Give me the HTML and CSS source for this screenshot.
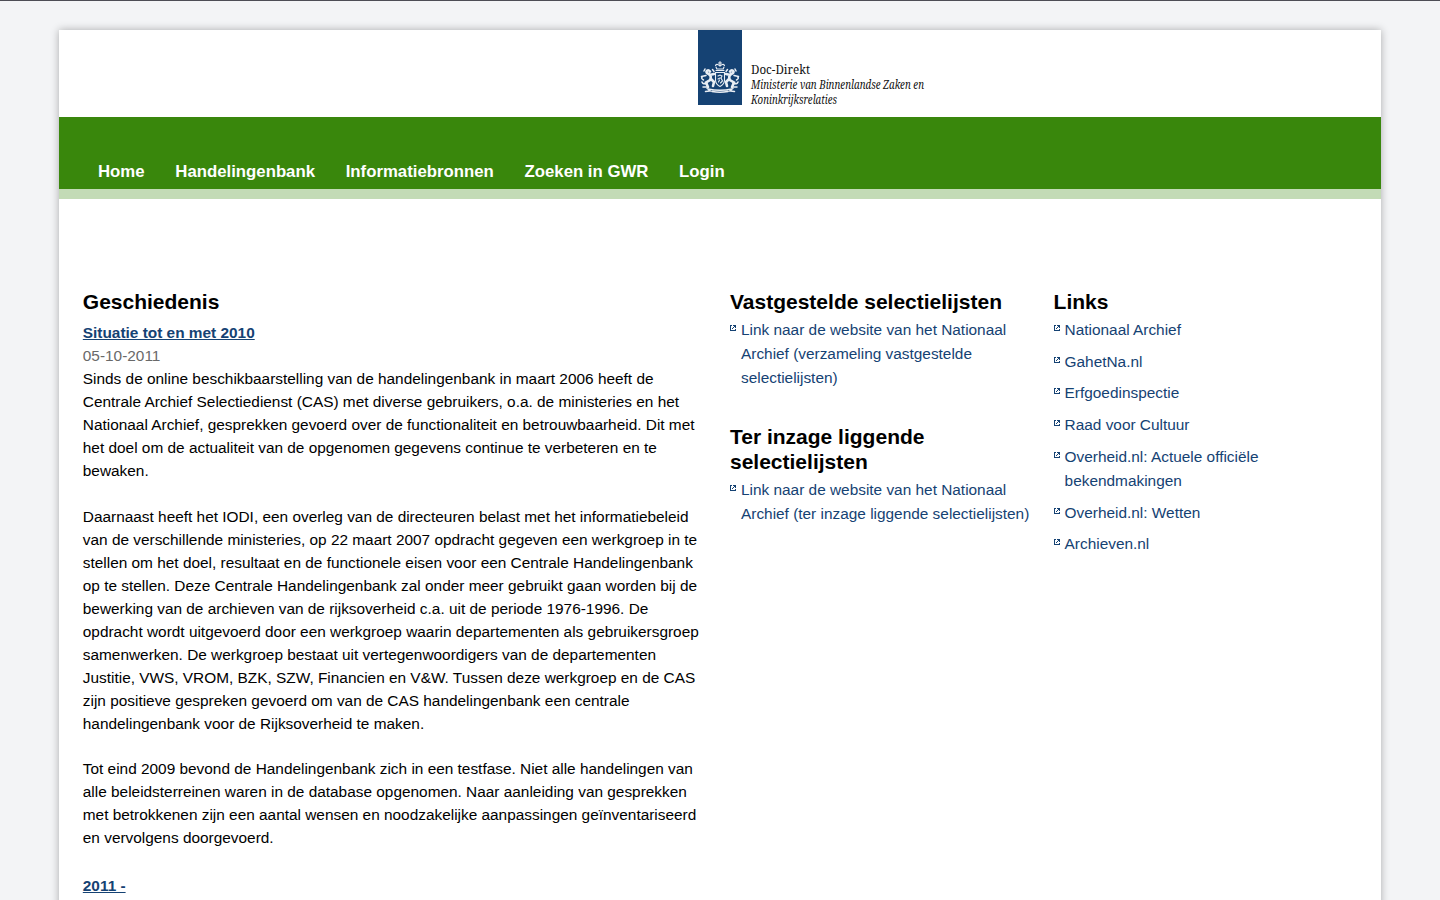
FILE: index.html
```html
<!DOCTYPE html>
<html lang="nl">
<head>
<meta charset="utf-8">
<title>Handelingenbank</title>
<link rel="stylesheet" href="styles.css">
</head>
<body>
<svg class="defs" aria-hidden="true">
  <symbol id="ext" viewBox="0 0 6 6"><path d="M0 0h2v1H1v4h4V4h1v2H0zM3 0h3v3H5V2H4V1H3zM3 2h1v1H3zM2 3h1v1H2z"/></symbol>
</svg>
<div class="page">
  <header class="brand">
    <svg class="logo" width="240" height="87" viewBox="0 0 240 87" role="img" aria-label="Doc-Direkt">
      <rect width="44" height="75" fill="#154273"/>
      <g fill="none" stroke="#e9eef4" stroke-width="1.1" stroke-linecap="round">
        <path d="M22 31.500v3M20.500 33h3M17.500 35.500c1-2 3-1 4.500.5c1.500-1.500 3.500-2.500 4.500-.5M18 37l.8 2h6.400l.8-2M18 40.500h8"/>
        <path d="M17.500 42.500h9v8q-.5 4-4.500 6q-4-2-4.500-6z"/>
        <path d="M20 46l2-1l2 1l-1 2l1.500 3l-2 2M20 49l2-1M20.500 52l1-2"/>
        <g><path stroke-width="2.600" d="M12 41.500q-2-2.500-3.500 0q0 2 2.500 2.500q3 2.500 1 6l-4 2.500l2 4.500M11.500 45l4.500-1M13 49l3 3l-1 4"/><path stroke-width="1.500" d="M8 45.500l-4.500 1M5.500 50q-3-1.500-1-3.500M9 53q-4 2-5-1M5 57h5M7 39l-1 2M14.500 39.500l1.500 2"/></g>
        <g transform="matrix(-1 0 0 1 44 0)"><path stroke-width="2.600" d="M12 41.500q-2-2.500-3.500 0q0 2 2.500 2.500q3 2.500 1 6l-4 2.500l2 4.500M11.500 45l4.500-1M13 49l3 3l-1 4"/><path stroke-width="1.500" d="M8 45.500l-4.500 1M5.500 50q-3-1.500-1-3.500M9 53q-4 2-5-1M5 57h5M7 39l-1 2M14.500 39.500l1.500 2"/></g>
        <path stroke-width="1.500" d="M7.500 61.500l4.500-.5l-2-2q12 2.500 24 0l-2 2l4.500 .5M14 61.500q8 1.500 16 0"/>
      </g>
      <g class="logo-text">
        <text x="53" y="44" textLength="59" lengthAdjust="spacingAndGlyphs">Doc-Direkt</text>
        <text class="it" x="53" y="59" textLength="173" lengthAdjust="spacingAndGlyphs">Ministerie van Binnenlandse Zaken en</text>
        <text class="it" x="53" y="74" textLength="86" lengthAdjust="spacingAndGlyphs">Koninkrijksrelaties</text>
      </g>
    </svg>
  </header>
  <nav class="nav"><a>Home</a><a>Handelingenbank</a><a>Informatiebronnen</a><a>Zoeken in GWR</a><a>Login</a></nav>
  <main class="columns">
    <section class="story">
      <h2>Geschiedenis</h2>
      <h3><a>Situatie tot en met 2010</a></h3>
      <div class="date">05-10-2011</div>
      <p>Sinds de online beschikbaarstelling van de handelingenbank in maart 2006 heeft de<br>Centrale Archief Selectiedienst (CAS) met diverse gebruikers, o.a. de ministeries en het<br>Nationaal Archief, gesprekken gevoerd over de functionaliteit en betrouwbaarheid. Dit met<br>het doel om de actualiteit van de opgenomen gegevens continue te verbeteren en te<br>bewaken.</p>
      <p class="tight">Daarnaast heeft het IODI, een overleg van de directeuren belast met het informatiebeleid<br>van de verschillende ministeries, op 22 maart 2007 opdracht gegeven een werkgroep in te<br>stellen om het doel, resultaat en de functionele eisen voor een Centrale Handelingenbank<br>op te stellen. Deze Centrale Handelingenbank zal onder meer gebruikt gaan worden bij de<br>bewerking van de archieven van de rijksoverheid c.a. uit de periode 1976-1996. De<br>opdracht wordt uitgevoerd door een werkgroep waarin departementen als gebruikersgroep<br>samenwerken. De werkgroep bestaat uit vertegenwoordigers van de departementen<br>Justitie, VWS, VROM, BZK, SZW, Financien en V&amp;W. Tussen deze werkgroep en de CAS<br>zijn positieve gespreken gevoerd om van de CAS handelingenbank een centrale<br>handelingenbank voor de Rijksoverheid te maken.</p>
      <p>Tot eind 2009 bevond de Handelingenbank zich in een testfase. Niet alle handelingen van<br>alle beleidsterreinen waren in de database opgenomen. Naar aanleiding van gesprekken<br>met betrokkenen zijn een aantal wensen en noodzakelijke aanpassingen geïnventariseerd<br>en vervolgens doorgevoerd.</p>
      <h3 class="next"><a>2011 -</a></h3>
    </section>
    <section class="lists">
      <h2>Vastgestelde selectielijsten</h2>
      <ul><li><svg class="ext"><use href="#ext"/></svg><a>Link naar de website van het Nationaal<br>Archief (verzameling vastgestelde<br>selectielijsten)</a></li></ul>
      <h2 class="second">Ter inzage liggende<br>selectielijsten</h2>
      <ul><li><svg class="ext"><use href="#ext"/></svg><a>Link naar de website van het Nationaal<br>Archief (ter inzage liggende selectielijsten)</a></li></ul>
    </section>
    <section class="links">
      <h2>Links</h2>
      <ul>
        <li><svg class="ext"><use href="#ext"/></svg><a>Nationaal Archief</a></li>
        <li><svg class="ext"><use href="#ext"/></svg><a>GahetNa.nl</a></li>
        <li><svg class="ext"><use href="#ext"/></svg><a>Erfgoedinspectie</a></li>
        <li><svg class="ext"><use href="#ext"/></svg><a>Raad voor Cultuur</a></li>
        <li><svg class="ext"><use href="#ext"/></svg><a>Overheid.nl: Actuele officiële<br>bekendmakingen</a></li>
        <li><svg class="ext"><use href="#ext"/></svg><a>Overheid.nl: Wetten</a></li>
        <li><svg class="ext"><use href="#ext"/></svg><a>Archieven.nl</a></li>
      </ul>
    </section>
  </main>
</div>
</body>
</html>
```

FILE: styles.css
```css
* { box-sizing: border-box; }
body {
  margin: 0;
  height: 900px;
  overflow: hidden;
  border-top: 1px solid #4d4d55;
  padding: 29px 59px 0;
  background: #f3f4f6;
  color: #000;
  font: 15.4px/23px "Liberation Sans", Arial, sans-serif;
}
.defs { display: none; }
.page { height: 890px; background: #fff; box-shadow: 0 0 8px rgba(0, 0, 0, .3); }
.brand { height: 87px; padding-left: 639px; }
.logo { display: block; overflow: visible; }
.logo-text { font-family: "Noto Serif", "Liberation Serif", serif; font-size: 12px; fill: #111; }
.logo-text .it { font-style: italic; }
.nav {
  display: flex;
  align-items: flex-end;
  gap: 30.7px;
  height: 82px;
  padding: 0 39px 6px;
  background: #39870c;
  border-bottom: 10px solid #c3dbb6;
  color: #fff;
  font-size: 16.78px;
  font-weight: bold;
}
.columns { display: grid; grid-template-columns: 647.2px 323.6px 1fr; padding: 90px 0 0 23.8px; white-space: nowrap; }
h2 { margin: 0; font-size: 21px; line-height: 25px; }
h3 { margin: 7px 0 0; font-size: 15.4px; line-height: 23px; }
h3 a { color: #154273; text-decoration: underline; }
.date { color: #696969; }
p { margin: 0 0 23px; }
p.tight { margin-bottom: 22px; }
h3.next { margin-top: 25px; }
ul { margin: 0; padding: 4px 0 0; list-style: none; color: #154273; line-height: 24px; }
li { display: flex; gap: 5px; margin-bottom: 7.73px; }
.ext { flex: none; width: 6px; height: 6px; margin-top: 7px; fill: #154273; shape-rendering: crispEdges; }
.second { margin-top: 34.3px; }
```
